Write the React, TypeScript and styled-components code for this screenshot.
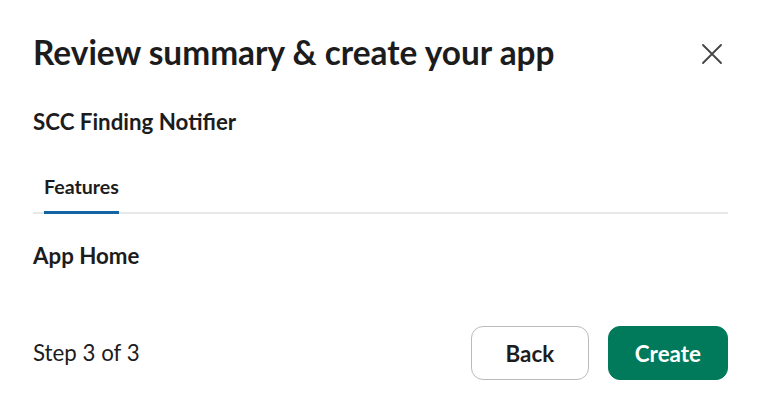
import React from "react";
import styled, { createGlobalStyle } from "styled-components";

const Global = createGlobalStyle`
  html, body { margin: 0; padding: 0; background: #ffffff; }
  body { font-family: Lato, "Noto Sans", sans-serif; color: #1d1c1d; }
  * { box-sizing: border-box; }
`;

const Modal = styled.div`
  width: 766px;
  height: 408px;
  padding: 0 38px 0 33px;
  display: flex;
  flex-direction: column;
  background: #fff;
`;

const Header = styled.div`
  height: 108px;
  display: flex;
  align-items: center;
  justify-content: space-between;
`;

const Title = styled.h1`
  margin: 0;
  margin-top: -3px;
  font-size: 33.4px;
  font-weight: 700;
  line-height: 1;
`;

const CloseButton = styled.button`
  width: 40px;
  height: 40px;
  margin-right: -4px;
  border: none;
  background: none;
  padding: 0;
  display: flex;
  align-items: center;
  justify-content: center;
  color: #454245;
  cursor: pointer;
`;

const AppName = styled.div`
  font-size: 22.3px;
  font-weight: 700;
  line-height: 28px;
`;

const Tabs = styled.div`
  margin-top: 39px;
  display: flex;
  border-bottom: 2px solid #e8e8e8;
  padding-left: 11px;
`;

const Tab = styled.div<{ $active?: boolean }>`
  font-size: 19.6px;
  font-weight: 700;
  line-height: 24px;
  padding-bottom: 12px;
  margin-bottom: -2px;
  border-bottom: 3px solid ${(p) => (p.$active ? "#1264a3" : "transparent")};
  color: #1d1c1d;
`;

const SectionTitle = styled.div`
  margin-top: 28px;
  font-size: 22.3px;
  font-weight: 700;
  line-height: 28px;
`;

const Footer = styled.div`
  margin-top: auto;
  height: 108px;
  display: flex;
  align-items: center;
  justify-content: space-between;
  padding-bottom: 2px;
`;

const StepText = styled.div`
  font-size: 22.3px;
  font-weight: 400;
  line-height: 28px;
`;

const Actions = styled.div`
  display: flex;
  gap: 19px;
`;

const Button = styled.button<{ $primary?: boolean }>`
  height: 54px;
  min-width: 118px;
  padding: 0 26px;
  border-radius: 12px;
  font-family: Lato, "Noto Sans", sans-serif;
  font-size: 22.4px;
  font-weight: 700;
  cursor: pointer;
  border: 1px solid ${(p) => (p.$primary ? "#007a5a" : "#bbbbbb")};
  background: ${(p) => (p.$primary ? "#007a5a" : "#ffffff")};
  color: ${(p) => (p.$primary ? "#ffffff" : "#1d1c1d")};
`;

export default function App() {
  return (
    <>
      <Global />
      <Modal>
        <Header>
          <Title>Review summary &amp; create your app</Title>
          <CloseButton aria-label="Close">
            <svg width="20" height="20" viewBox="0 0 20 20" fill="none">
              <path d="M1 1 L19 19 M19 1 L1 19" stroke="currentColor" strokeWidth="1.8" strokeLinecap="round" />
            </svg>
          </CloseButton>
        </Header>
        <AppName>SCC Finding Notifier</AppName>
        <Tabs>
          <Tab $active>Features</Tab>
        </Tabs>
        <SectionTitle>App Home</SectionTitle>
        <Footer>
          <StepText>Step 3 of 3</StepText>
          <Actions>
            <Button>Back</Button>
            <Button $primary>Create</Button>
          </Actions>
        </Footer>
      </Modal>
    </>
  );
}
